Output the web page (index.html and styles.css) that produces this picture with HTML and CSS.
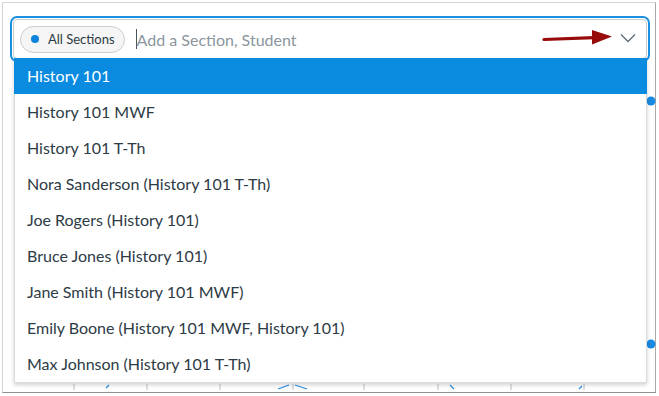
FILE: index.html
```html
<!DOCTYPE html>
<html lang="en">
<head>
    <meta charset="UTF-8">
    <title>Section Filter</title>
    <link rel="stylesheet" href="styles.css">
</head>
<body>
    <div class="frame">
        <!-- faint chart behind the open menu -->
        <svg class="chart" width="653" height="390" viewBox="0 0 653 390">
            <g stroke="#b9c0c6" stroke-width="1">
                <line x1="71" y1="381" x2="71" y2="387"/>
                <line x1="144" y1="381" x2="144" y2="387"/>
                <line x1="217" y1="381" x2="217" y2="387"/>
                <line x1="290" y1="381" x2="290" y2="387"/>
                <line x1="361" y1="381" x2="361" y2="387"/>
                <line x1="435" y1="381" x2="435" y2="387"/>
                <line x1="508" y1="381" x2="508" y2="387"/>
                <line x1="581" y1="381" x2="581" y2="387"/>
            </g>
            <g stroke="#2a8fe0" stroke-width="1.3" fill="none">
                <line x1="103" y1="385" x2="106" y2="382"/>
                <line x1="275" y1="386" x2="286" y2="382"/>
                <line x1="292" y1="382" x2="304" y2="386"/>
                <line x1="447" y1="382" x2="451" y2="386"/>
                <line x1="576" y1="386" x2="579" y2="383"/>
            </g>
            <circle cx="648" cy="98" r="4.5" fill="#1a8ae0"/>
            <circle cx="648" cy="341" r="4.5" fill="#1a8ae0"/>
        </svg>

        <div class="picker">
            <span class="pill"><span class="dot"></span>All Sections</span>
            <span class="caret"></span>
            <span class="placeholder">Add a Section, Student</span>
            <svg class="arrow" width="72" height="20" viewBox="0 0 72 20">
                <path d="M2 11.5 L52 9.6" stroke="#980b0b" stroke-width="3.2" stroke-linecap="round"/>
                <path d="M50 2 L70 8.5 L50 16.5 Z" fill="#980b0b"/>
            </svg>
            <svg class="chevron" width="16" height="10" viewBox="0 0 16 10">
                <path d="M1 1.5 L8 8.5 L15 1.5" fill="none" stroke="#5f6b75" stroke-width="1.3"/>
            </svg>
        </div>

        <ul class="menu">
            <li class="active">History 101</li>
            <li>History 101 MWF</li>
            <li>History 101 T-Th</li>
            <li>Nora Sanderson (History 101 T-Th)</li>
            <li>Joe Rogers (History 101)</li>
            <li>Bruce Jones (History 101)</li>
            <li>Jane Smith (History 101 MWF)</li>
            <li>Emily Boone (History 101 MWF, History 101)</li>
            <li>Max Johnson (History 101 T-Th)</li>
        </ul>
    </div>
</body>
</html>
```

FILE: styles.css
```css
* {
    margin: 0;
    padding: 0;
    box-sizing: border-box;
}

body {
    font-family: Lato, 'Liberation Sans', sans-serif;
    background: #ffffff;
    color: #2d3b45;
    width: 659px;
    height: 396px;
    overflow: hidden;
}

.frame {
    position: relative;
    margin: 2px;
    width: 654px;
    height: 391px;
    border: 1px solid #d4d4d4;
    border-right-color: #a9a9a9;
    border-bottom-color: #8f8f8f;
    background: #fff;
    padding: 16px 7px 0 8px;
}

.chart {
    position: absolute;
    left: 0;
    top: 0;
}

.picker {
    position: relative;
    display: flex;
    align-items: center;
    height: 40px;
    width: 634px;
    margin-left: 2px;
    border: 1px solid #c7cdd1;
    border-radius: 4px;
    background: #fff;
    box-shadow: 0 0 0 1px #fff, 0 0 0 3px #1d8fe1;
    padding-left: 6px;
}

.pill {
    display: flex;
    align-items: center;
    height: 27px;
    padding: 0 9px 0 10px;
    border: 1px solid #c7cdd1;
    border-radius: 14px;
    background: #f5f5f5;
    font-size: 13px;
    color: #2d3b45;
}

.dot {
    width: 8px;
    height: 8px;
    border-radius: 50%;
    background: #0a84dc;
    margin-right: 9px;
}

.caret {
    width: 1px;
    height: 20px;
    background: #4a555e;
    margin-left: 11px;
}

.placeholder {
    font-size: 16px;
    color: #8b969e;
    flex: 1;
}

.arrow {
    margin-right: 6px;
    margin-top: -2px;
}

.chevron {
    margin-right: 10px;
    margin-top: -2px;
}

.menu {
    position: absolute;
    left: 11px;
    top: 55px;
    width: 633px;
    list-style: none;
    background: #fff;
    border: 1px solid #d9dcdf;
    border-top: none;
    box-shadow: 0 2px 4px rgba(0, 0, 0, 0.18);
}

.menu li {
    height: 36px;
    line-height: 36px;
    padding-left: 12px;
    font-size: 16px;
    color: #2d3b45;
}

.menu li.active {
    background: #0a8be0;
    color: #ffffff;
    margin: 0 -1px;
    padding-left: 13px;
}
```
